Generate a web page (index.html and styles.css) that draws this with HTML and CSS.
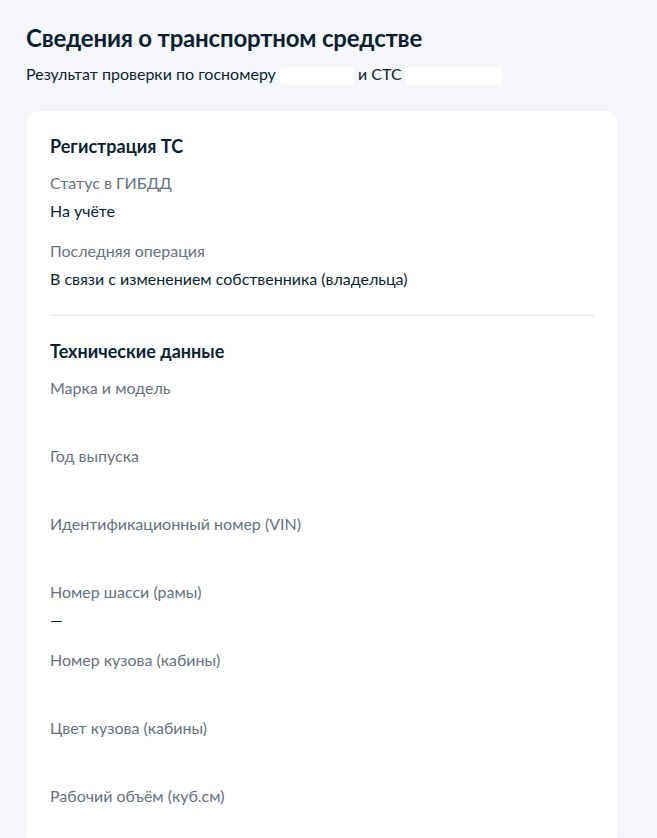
FILE: index.html
```html
<!DOCTYPE html>
<html lang="ru">
<head>
<meta charset="utf-8">
<title>Сведения о транспортном средстве</title>
<link rel="stylesheet" href="styles.css">
</head>
<body>
<main class="page">
  <h1 class="title">Сведения о транспортном средстве</h1>
  <p class="subtitle">Результат проверки по госномеру <span class="redact redact-a"></span> и СТС <span class="redact redact-b"></span></p>

  <section class="card">
    <div class="section">
      <h2 class="section-title">Регистрация ТС</h2>
      <div class="field">
        <div class="label">Статус в ГИБДД</div>
        <div class="value">На учёте</div>
      </div>
      <div class="field">
        <div class="label">Последняя операция</div>
        <div class="value">В связи с изменением собственника (владельца)</div>
      </div>
    </div>
    <hr class="divider">
    <div class="section">
      <h2 class="section-title">Технические данные</h2>
      <div class="field">
        <div class="label">Марка и модель</div>
        <div class="value value-hidden">&nbsp;</div>
      </div>
      <div class="field">
        <div class="label">Год выпуска</div>
        <div class="value value-hidden">&nbsp;</div>
      </div>
      <div class="field">
        <div class="label">Идентификационный номер (VIN)</div>
        <div class="value value-hidden">&nbsp;</div>
      </div>
      <div class="field">
        <div class="label">Номер шасси (рамы)</div>
        <div class="value">—</div>
      </div>
      <div class="field">
        <div class="label">Номер кузова (кабины)</div>
        <div class="value value-hidden">&nbsp;</div>
      </div>
      <div class="field">
        <div class="label">Цвет кузова (кабины)</div>
        <div class="value value-hidden">&nbsp;</div>
      </div>
      <div class="field">
        <div class="label">Рабочий объём (куб.см)</div>
        <div class="value value-hidden">&nbsp;</div>
      </div>
    </div>
  </section>
</main>
</body>
</html>
```

FILE: styles.css
```css
html, body {
  margin: 0;
  padding: 0;
}
body {
  background: #f5f7fa;
  font-family: Lato, "Noto Sans", "DejaVu Sans", sans-serif;
  color: #0b1f33;
}
.page {
  padding: 23px 39px 0 26px;
}
.title {
  margin: 0;
  font-size: 24px;
  line-height: 30px;
  font-weight: 700;
  letter-spacing: -0.2px;
}
.subtitle {
  margin: 10px 0 0;
  font-size: 16px;
  line-height: 22px;
  color: #0b1f33;
}
.redact {
  display: inline-block;
  height: 18px;
  vertical-align: middle;
  background: #ffffff;
  border-radius: 4px;
}
.redact-a { width: 74px; }
.redact-b { width: 96px; }
.card {
  margin-top: 26px;
  background: #ffffff;
  border-radius: 12px;
  padding: 24px 24px 10px;
  box-shadow: 0 1px 4px rgba(11, 31, 51, 0.04);
}
.section-title {
  margin: 0 0 16px;
  font-size: 18px;
  line-height: 22px;
  font-weight: 700;
}
.field {
  margin-bottom: 20px;
}
.field:last-child {
  margin-bottom: 0;
}
.label {
  font-size: 16px;
  line-height: 20px;
  color: #66727f;
  margin-bottom: 8px;
}
.value {
  font-size: 16px;
  line-height: 20px;
  color: #0b1f33;
}
.divider {
  border: 0;
  border-top: 1px solid #e1e5eb;
  margin: 26px 0 24px;
}
```
